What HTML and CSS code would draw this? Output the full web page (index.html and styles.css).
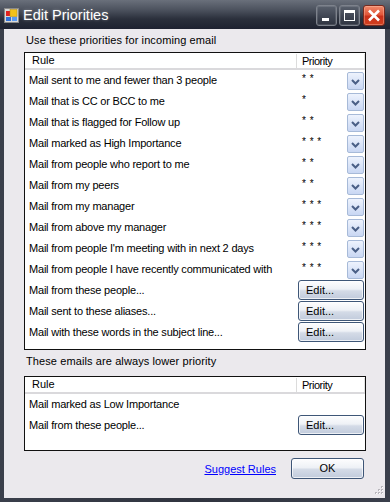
FILE: index.html
```html
<!DOCTYPE html>
<html>
<head>
<meta charset="utf-8">
<link rel="stylesheet" href="styles.css">
</head>
<body>
<div class="window">
  <div class="titlebar">
    <svg class="appicon" width="15" height="15" viewBox="0 0 15 15">
      <rect x="0.5" y="0.5" width="14" height="14" fill="#d8d8d8" stroke="#8a8a8a"/>
      <rect x="2" y="3" width="4" height="5" fill="#e02020"/>
      <rect x="6" y="1.5" width="7" height="7" fill="#f4c21a" stroke="#b08a10" stroke-width="0.5"/>
      <rect x="2" y="9" width="5" height="4" fill="#2f6fd8"/>
      <rect x="8" y="9" width="5" height="4" fill="#5a9af0"/>
    </svg>
    <span class="title">Edit Priorities</span>
    <div class="caption-buttons">
      <div class="cbtn">
        <svg width="19" height="19" viewBox="0 0 19 19"><rect x="5" y="12" width="7" height="3" fill="#fff"/></svg>
      </div>
      <div class="cbtn">
        <svg width="19" height="19" viewBox="0 0 19 19"><rect x="4.5" y="4.5" width="10" height="10" fill="none" stroke="#fff"/><rect x="4" y="4" width="11" height="3" fill="#fff"/></svg>
      </div>
      <div class="cbtn close">
        <svg width="20" height="19" viewBox="0 0 20 19"><path d="M5 4.5 L15 14.5 M15 4.5 L5 14.5" stroke="#fff" stroke-width="2.6"/></svg>
      </div>
    </div>
  </div>
  <div class="client">
    <div class="label">Use these priorities for incoming email</div>
    <div class="listbox upper">
      <div class="header"><div class="h-rule">Rule</div><div class="h-pri">Priority</div></div>
      <div class="row"><div class="rule">Mail sent to me and fewer than 3 people</div><div class="pri"><span class="stars">* *</span><span class="dd"><svg width="15" height="15" viewBox="0 0 15 15"><path d="M4 6 L7.5 9.5 L11 6" fill="none" stroke="#4a5f86" stroke-width="2"/></svg></span></div></div>
      <div class="row"><div class="rule">Mail that is CC or BCC to me</div><div class="pri"><span class="stars">*</span><span class="dd"><svg width="15" height="15" viewBox="0 0 15 15"><path d="M4 6 L7.5 9.5 L11 6" fill="none" stroke="#4a5f86" stroke-width="2"/></svg></span></div></div>
      <div class="row"><div class="rule">Mail that is flagged for Follow up</div><div class="pri"><span class="stars">* *</span><span class="dd"><svg width="15" height="15" viewBox="0 0 15 15"><path d="M4 6 L7.5 9.5 L11 6" fill="none" stroke="#4a5f86" stroke-width="2"/></svg></span></div></div>
      <div class="row"><div class="rule">Mail marked as High Importance</div><div class="pri"><span class="stars">* * *</span><span class="dd"><svg width="15" height="15" viewBox="0 0 15 15"><path d="M4 6 L7.5 9.5 L11 6" fill="none" stroke="#4a5f86" stroke-width="2"/></svg></span></div></div>
      <div class="row"><div class="rule">Mail from people who report to me</div><div class="pri"><span class="stars">* *</span><span class="dd"><svg width="15" height="15" viewBox="0 0 15 15"><path d="M4 6 L7.5 9.5 L11 6" fill="none" stroke="#4a5f86" stroke-width="2"/></svg></span></div></div>
      <div class="row"><div class="rule">Mail from my peers</div><div class="pri"><span class="stars">* *</span><span class="dd"><svg width="15" height="15" viewBox="0 0 15 15"><path d="M4 6 L7.5 9.5 L11 6" fill="none" stroke="#4a5f86" stroke-width="2"/></svg></span></div></div>
      <div class="row"><div class="rule">Mail from my manager</div><div class="pri"><span class="stars">* * *</span><span class="dd"><svg width="15" height="15" viewBox="0 0 15 15"><path d="M4 6 L7.5 9.5 L11 6" fill="none" stroke="#4a5f86" stroke-width="2"/></svg></span></div></div>
      <div class="row"><div class="rule">Mail from above my manager</div><div class="pri"><span class="stars">* * *</span><span class="dd"><svg width="15" height="15" viewBox="0 0 15 15"><path d="M4 6 L7.5 9.5 L11 6" fill="none" stroke="#4a5f86" stroke-width="2"/></svg></span></div></div>
      <div class="row"><div class="rule">Mail from people I'm meeting with in next 2 days</div><div class="pri"><span class="stars">* * *</span><span class="dd"><svg width="15" height="15" viewBox="0 0 15 15"><path d="M4 6 L7.5 9.5 L11 6" fill="none" stroke="#4a5f86" stroke-width="2"/></svg></span></div></div>
      <div class="row"><div class="rule">Mail from people I have recently communicated with</div><div class="pri"><span class="stars">* * *</span><span class="dd"><svg width="15" height="15" viewBox="0 0 15 15"><path d="M4 6 L7.5 9.5 L11 6" fill="none" stroke="#4a5f86" stroke-width="2"/></svg></span></div></div>
      <div class="row"><div class="rule">Mail from these people...</div><div class="pri"><span class="btn edit">Edit...</span></div></div>
      <div class="row"><div class="rule">Mail sent to these aliases...</div><div class="pri"><span class="btn edit">Edit...</span></div></div>
      <div class="row"><div class="rule">Mail with these words in the subject line...</div><div class="pri"><span class="btn edit">Edit...</span></div></div>
    </div>
    <div class="label second">These emails are always lower priority</div>
    <div class="listbox lower">
      <div class="header"><div class="h-rule">Rule</div><div class="h-pri">Priority</div></div>
      <div class="row"><div class="rule">Mail marked as Low Importance</div><div class="pri"></div></div>
      <div class="row"><div class="rule">Mail from these people...</div><div class="pri"><span class="btn edit">Edit...</span></div></div>
    </div>
    <div class="footer">
      <a class="link" href="#">Suggest Rules</a>
      <span class="btn ok">OK</span>
    </div>
    <svg class="grip" width="11" height="11" viewBox="0 0 11 11">
      <g fill="#b8b6bc">
        <rect x="8" y="0" width="2" height="2"/>
        <rect x="5" y="3" width="2" height="2"/><rect x="8" y="3" width="2" height="2"/>
        <rect x="2" y="6" width="2" height="2"/><rect x="5" y="6" width="2" height="2"/><rect x="8" y="6" width="2" height="2"/>
      </g>
      <g fill="#ffffff">
        <rect x="9" y="1" width="1" height="1"/>
        <rect x="6" y="4" width="1" height="1"/><rect x="9" y="4" width="1" height="1"/>
        <rect x="3" y="7" width="1" height="1"/><rect x="6" y="7" width="1" height="1"/><rect x="9" y="7" width="1" height="1"/>
      </g>
    </svg>
  </div>
</div>
</body>
</html>
```

FILE: styles.css
```css
html, body {
  margin: 0;
  padding: 0;
  background: #2e333e;
}
body {
  font-family: "Liberation Sans", Arial, sans-serif;
  font-size: 11px;
  color: #000;
}
.window {
  width: 390px;
  height: 502px;
  display: flex;
  flex-direction: column;
  background: linear-gradient(90deg, #3a3f4b, #30343f 50%, #3a3f4b);
}
.titlebar {
  height: 29px;
  flex: none;
  display: flex;
  align-items: center;
  padding: 0 5px 0 4px;
  background: linear-gradient(#6a707b, #4b515d 35%, #2b303c 65%, #1e2231);
}
.appicon {
  flex: none;
  margin-top: 1px;
}
.title {
  margin-left: 4px;
  color: #fff;
  font-size: 14.5px;
  text-shadow: 0 0 3px rgba(255, 255, 255, 0.35);
  margin-top: 1px;
}
.caption-buttons {
  margin-left: auto;
  display: flex;
  gap: 2px;
  align-self: flex-start;
  margin-top: 5px;
}
.cbtn {
  width: 19px;
  height: 19px;
  border: 1px solid #7d828c;
  border-radius: 3px;
  background: linear-gradient(#59606c, #424855 50%, #2f3441);
  box-shadow: inset 0 0 0 1px rgba(255, 255, 255, 0.12);
}
.cbtn svg {
  display: block;
}
.cbtn.close {
  width: 20px;
  margin-left: 1px;
  border-color: #7a2a1e;
  background: linear-gradient(#f08a6c, #e2573a 45%, #c9301a 55%, #d2401f);
  box-shadow: inset 0 0 0 1px rgba(255, 210, 190, 0.35);
}
.client {
  flex: 1;
  margin: 0 5px 4px 4px;
  background: #ebe9ed;
  padding: 4px 19px 0 20px;
  display: flex;
  flex-direction: column;
  position: relative;
}
.label {
  line-height: 15px;
  padding-left: 2px;
  margin-bottom: 4px;
  letter-spacing: 0.1px;
}
.label.second {
  margin-top: 4px;
  margin-bottom: 7px;
}
.listbox {
  background: #fff;
  border: 1px solid #111;
}
.listbox.upper {
  padding-bottom: 6px;
}
.listbox.lower {
  padding-bottom: 14px;
}
.header {
  display: grid;
  grid-template-columns: 271px 69px;
  height: 15px;
  line-height: 15px;
  border-bottom: 2px solid #dad9dc;
}
.h-rule {
  padding-left: 7px;
}
.h-pri {
  border-left: 1px solid #dcdcdc;
  border-right: 1px solid #e4e4e4;
  padding-left: 5px;
  margin: 1px 0 0 0;
  line-height: 14px;
  letter-spacing: -0.5px;
}
.row {
  display: grid;
  grid-template-columns: 271px 69px;
  height: 21px;
}
.rule {
  padding-left: 4px;
  line-height: 21px;
  white-space: nowrap;
  overflow: hidden;
  letter-spacing: -0.2px;
}
.pri {
  position: relative;
  display: flex;
  align-items: flex-start;
}
.stars {
  font-size: 10px;
  line-height: 10px;
  margin: 4px 0 0 6px;
  letter-spacing: 0.5px;
}
.dd {
  position: absolute;
  left: 51px;
  top: 2px;
  width: 15px;
  height: 16px;
  border: 1px solid #a7bad8;
  border-radius: 2px;
  background: linear-gradient(#eef3fd, #dbe5f8 50%, #c9d7f3);
  display: flex;
  align-items: center;
  justify-content: center;
}
.dd svg {
  display: block;
}
.btn {
  box-sizing: border-box;
  border: 1px solid #3e5677;
  border-radius: 3px;
  background: linear-gradient(#fdfdfe, #eef1f6 45%, #d4dbe7 55%, #c1cbdc);
  box-shadow: inset 0 0 0 1px rgba(255, 255, 255, 0.7);
  line-height: 18px;
}
.btn.edit {
  margin: 0 0 0 2px;
  width: 66px;
  height: 20px;
  padding-left: 7px;
}
.footer {
  display: flex;
  align-items: center;
  justify-content: flex-end;
  margin-top: 7px;
  gap: 15px;
  padding-right: 2px;
}
.link {
  color: #0000ff;
  text-decoration: underline;
}
.btn.ok {
  width: 73px;
  height: 21px;
  line-height: 19px;
  text-align: center;
}
.grip {
  position: absolute;
  right: 1px;
  bottom: 1px;
}
```
